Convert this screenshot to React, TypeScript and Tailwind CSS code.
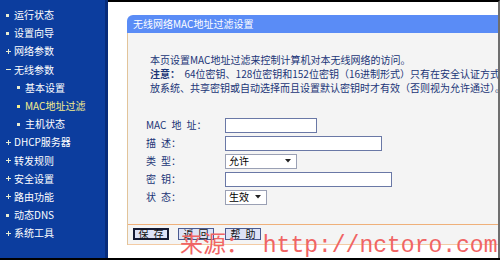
import React from 'react';

type NavItem = { label: string; mark: 'dot' | 'plus' | 'minus'; sub?: boolean; active?: boolean };

const navItems: NavItem[] = [
  { label: '运行状态', mark: 'dot' },
  { label: '设置向导', mark: 'dot' },
  { label: '网络参数', mark: 'plus' },
  { label: '无线参数', mark: 'minus' },
  { label: '基本设置', mark: 'dot', sub: true },
  { label: 'MAC地址过滤', mark: 'dot', sub: true, active: true },
  { label: '主机状态', mark: 'dot', sub: true },
  { label: 'DHCP服务器', mark: 'plus' },
  { label: '转发规则', mark: 'plus' },
  { label: '安全设置', mark: 'plus' },
  { label: '路由功能', mark: 'plus' },
  { label: '动态DNS', mark: 'dot' },
  { label: '系统工具', mark: 'plus' },
];

function Mark({ mark, active }: { mark: NavItem['mark']; active?: boolean }) {
  const color = active ? 'bg-[#f4ee8c]' : 'bg-[#e8ecd0]';
  if (mark === 'dot') {
    return <span className={`w-[3px] h-[3px] ${color}`} />;
  }
  return (
    <span className="relative w-[5px] h-[5px]">
      <span className={`absolute left-0 top-[2px] w-[5px] h-[1px] ${color}`} />
      {mark === 'plus' && <span className={`absolute left-[2px] top-0 w-[1px] h-[5px] ${color}`} />}
    </span>
  );
}

function TextBox({ width }: { width: string }) {
  return <div className={`${width} h-[15px] bg-white border border-[#6a78a6]`} />;
}

function SelectBox({ width, value }: { width: string; value: string }) {
  return (
    <div className={`${width} h-[15px] bg-white border border-[#9aa0b4] flex items-center justify-between pl-[3px] pr-[5px]`}>
      <span className="text-[10px] leading-none text-black">{value}</span>
      <svg width="6" height="4" viewBox="0 0 6 4">
        <path d="M0 0 H6 L3 3.5 Z" fill="#222" />
      </svg>
    </div>
  );
}

function Btn({ label, focused }: { label: string; focused?: boolean }) {
  return (
    <div
      className={`w-[36px] h-[12px] flex items-center justify-center bg-[#dde2f6] text-[10px] leading-none text-[#111] whitespace-pre ${
        focused ? 'border-2 border-[#151a33]' : 'border border-[#4a5a90]'
      }`}
    >
      {label}
    </div>
  );
}

export default function App() {
  const rows: { label: string; field: React.ReactNode }[] = [
    { label: 'MAC\u2002地\u2002址：', field: <TextBox width="w-[92px]" /> },
    { label: '描\u2002述：', field: <TextBox width="w-[157px]" /> },
    { label: '类\u2002型：', field: <SelectBox width="w-[72px]" value="允许" /> },
    { label: '密\u2002钥：', field: <TextBox width="w-[167px]" /> },
    { label: '状\u2002态：', field: <SelectBox width="w-[42px]" value="生效" /> },
  ];

  return (
    <div
      className="relative w-[500px] h-[260px] flex flex-col bg-white overflow-hidden"
      style={{ fontFamily: '"Noto Sans CJK SC", "Liberation Sans", sans-serif' }}
    >
      <div className="flex flex-1 min-h-0">
        <nav className="w-[108px] bg-[#0c3d9e] border-r-[3px] border-[#082c7a] pt-[6px] shrink-0">
          {navItems.map((item) => (
            <div
              key={item.label}
              className={`h-[18.2px] flex items-center ${item.sub ? 'pl-[17px]' : 'pl-[6px]'}`}
            >
              <span className="w-[8px] flex items-center">
                <Mark mark={item.mark} active={item.active} />
              </span>
              <span
                className={`text-[10px] leading-none ${item.active ? 'text-[#f4ee8c]' : 'text-white'}`}
              >
                {item.label}
              </span>
            </div>
          ))}
        </nav>

        <main className="flex-1 min-w-0 border-t-2 border-black border-r-2 border-r-[#6e6e6e] pl-[19px] pt-[13px] overflow-hidden">
          <section className="flex flex-col">
            <div className="h-[18px] rounded-tl-[6px] bg-[#5a8cf6] pl-[6px] flex items-center">
              <span className="text-[10px] leading-none text-white">无线网络MAC地址过滤设置</span>
            </div>
            <div className="border-l border-[#e2c49a] bg-[#f4f4f4]">
              <div className="pl-[22px] pt-[20px] text-[10px] leading-[14px] text-[#1b3477] whitespace-nowrap">
                <p>本页设置MAC地址过滤来控制计算机对本无线网络的访问。</p>
                <p>
                  <b>注意：</b>&nbsp;&nbsp;64位密钥、128位密钥和152位密钥（16进制形式）只有在安全认证方式为开
                </p>
                <p>放系统、共享密钥或自动选择而且设置默认密钥时才有效（否则视为允许通过）。</p>
              </div>
              <div className="pl-[18px] pt-[21px] pb-[18px]">
                {rows.map((r) => (
                  <div key={r.label} className="h-[18px] flex items-center">
                    <span className="w-[79px] text-[10px] leading-none text-[#1b3477] whitespace-pre">
                      {r.label}
                    </span>
                    {r.field}
                  </div>
                ))}
              </div>
              <div className="h-[21px] border-t border-b border-t-[#efb07a] border-b-[#f3cba4] flex items-start pt-[3px] pl-[5px] gap-[9px]">
                <Btn label={'保\u2002存'} focused />
                <Btn label={'返\u2002回'} />
                <div className="ml-[2px]">
                  <Btn label={'帮\u2002助'} />
                </div>
              </div>
            </div>
          </section>
        </main>
      </div>
      <div className="h-[2px] bg-black shrink-0" />

      <div
        className="absolute left-[180px] top-[235px] text-[23px] leading-[23px] text-[#f06464] whitespace-pre pointer-events-none"
        style={{ fontFamily: '"Liberation Mono", "Noto Sans CJK SC", monospace' }}
      >
        来源： http://nctoro.com
      </div>
    </div>
  );
}
